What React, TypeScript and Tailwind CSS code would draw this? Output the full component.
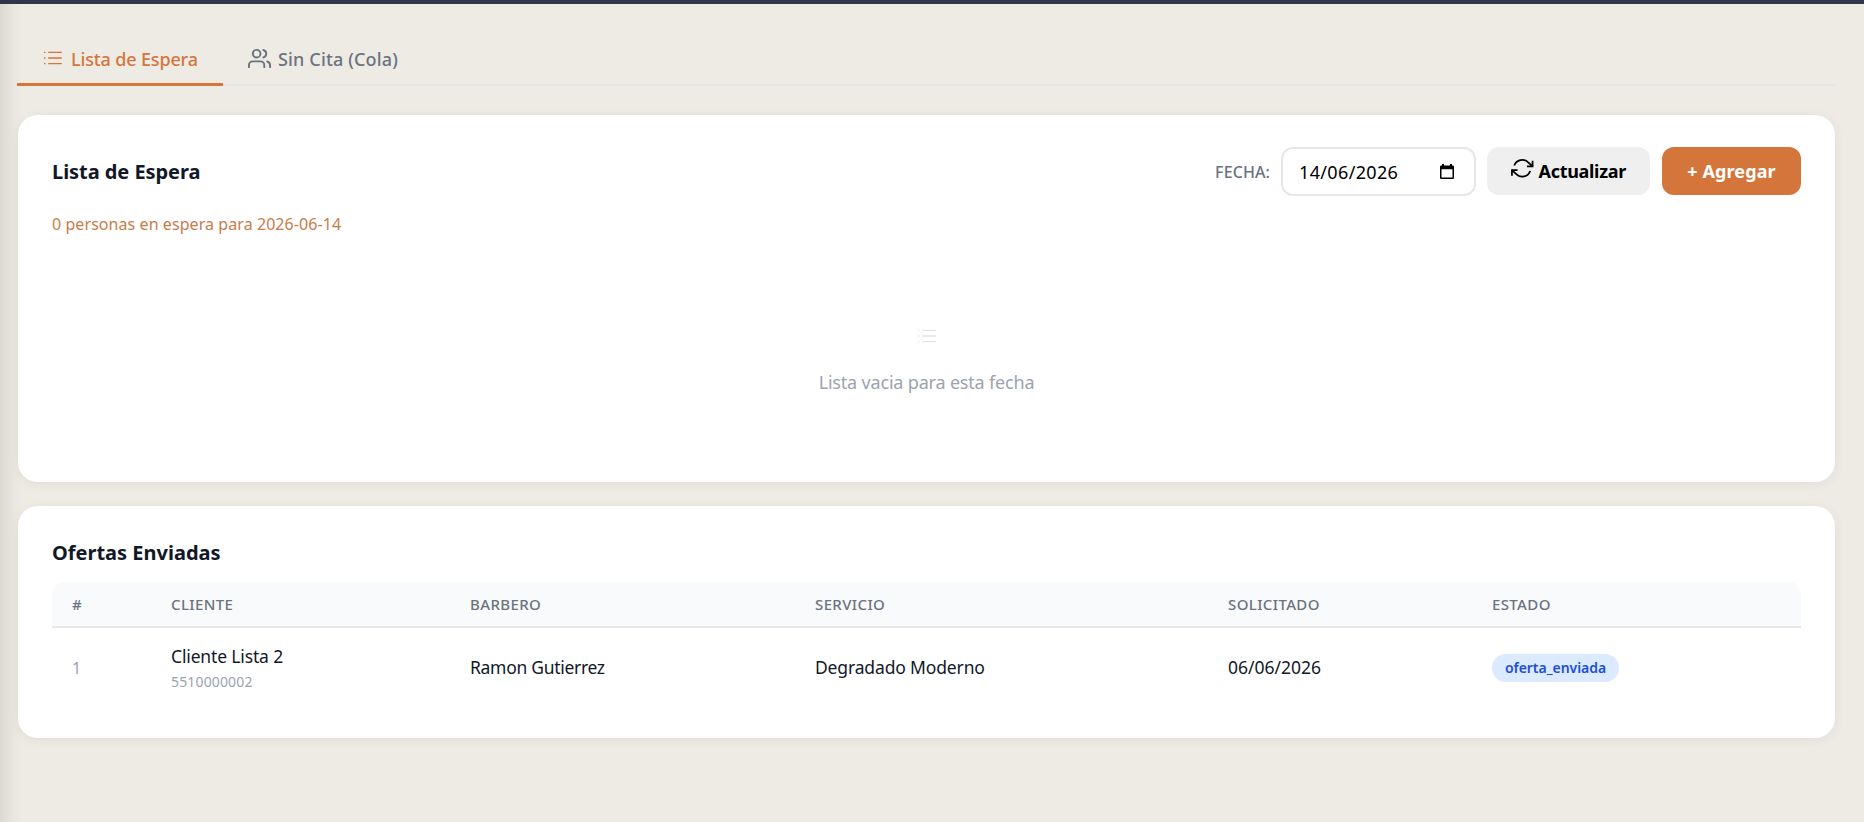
import { useState } from 'react';

interface Oferta {
  id: number;
  cliente: string;
  telefono: string;
  barbero: string;
  servicio: string;
  solicitado: string;
  estado: string;
}

const ofertas: Oferta[] = [
  {
    id: 1,
    cliente: 'Cliente Lista 2',
    telefono: '5510000002',
    barbero: 'Ramon Gutierrez',
    servicio: 'Degradado Moderno',
    solicitado: '06/06/2026',
    estado: 'oferta_enviada',
  },
];

const columns = [
  { label: '#', width: 'w-[99px]' },
  { label: 'CLIENTE', width: 'w-[299px]' },
  { label: 'BARBERO', width: 'w-[345px]' },
  { label: 'SERVICIO', width: 'w-[413px]' },
  { label: 'SOLICITADO', width: 'w-[264px]' },
  { label: 'ESTADO', width: 'w-[329px]' },
];

function ListIcon({ className = '' }: { className?: string }) {
  return (
    <svg width="18" height="14" viewBox="0 0 18 14" fill="none" stroke="currentColor" strokeWidth="1.4" className={className}>
      <path d="M4.2 1.4h13.6M4.2 7h13.6M4.2 12.6h13.6M0 1.4h1.5M0 7h1.5M0 12.6h1.5" />
    </svg>
  );
}

function UsersIcon() {
  return (
    <svg width="23" height="23" viewBox="0 0 24 24" fill="none" stroke="currentColor" strokeWidth="2" strokeLinecap="round" strokeLinejoin="round">
      <path d="M17 21v-2a4 4 0 0 0-4-4H5a4 4 0 0 0-4 4v2" />
      <circle cx="9" cy="7" r="4" />
      <path d="M23 21v-2a4 4 0 0 0-3-3.87M16 3.13a4 4 0 0 1 0 7.75" />
    </svg>
  );
}

function RefreshIcon({ className = '' }: { className?: string }) {
  return (
    <svg width="22.5" height="22.5" viewBox="0 0 24 24" fill="none" stroke="currentColor" strokeWidth="1.9" className={className}>
      <path d="M23 4v6h-6M1 20v-6h6" />
      <path d="M3.51 9a9 9 0 0 1 14.85-3.36L23 10M1 14l4.64 4.36A9 9 0 0 0 20.49 15" />
    </svg>
  );
}

function DateIcon() {
  return (
    <svg width="14" height="16" viewBox="0 0 14 16">
      <path
        fillRule="evenodd"
        fill="currentColor"
        d="M2 0h2v1.5h6V0h2v1.5h.8Q14 1.5 14 2.8v11Q14 15 12.8 15H1.2Q0 15 0 13.8v-11Q0 1.5 1.2 1.5H2zM1.5 5.2v8.3h11V5.2z"
      />
    </svg>
  );
}

export default function ListaEspera() {
  const [tab, setTab] = useState<'lista' | 'cola'>('lista');

  const tabClass = (active: boolean) =>
    active
      ? 'border-[#d4763b] text-[#d4763b]'
      : 'border-transparent text-[#6b7280]';

  return (
    <div className="h-[822px] overflow-hidden border-t-4 border-[#2d3748] bg-[#eeebe4] pl-[17px] pr-7 pt-6 font-['Noto_Sans',sans-serif] text-[#111827] shadow-[inset_20px_0_18px_-14px_rgba(0,0,0,0.1)]">
      {/* Tabs */}
      <div className="flex h-[58px] border-b-2 border-[#e5e5e5]">
        <button
          onClick={() => setTab('lista')}
          className={`-mb-0.5 flex h-[58px] w-[206px] items-center gap-[9px] border-b-3 pl-[27px] pt-1.5 text-lg font-medium tracking-[-0.15px] ${tabClass(tab === 'lista')}`}
        >
          <ListIcon className="mb-0.5" />
          <span className="whitespace-nowrap">Lista de Espera</span>
        </button>
        <button
          onClick={() => setTab('cola')}
          className={`-mb-0.5 flex h-[58px] items-center gap-[7px] border-b-3 pl-[25px] pt-1.5 text-lg font-medium tracking-[0.15px] ${tabClass(tab === 'cola')}`}
        >
          <UsersIcon />
          <span className="whitespace-nowrap">Sin Cita (Cola)</span>
        </button>
      </div>

      {/* Waiting list */}
      <section className="mx-px mt-[29px] h-[367px] rounded-[20px] bg-white px-[34px] pt-8 shadow-[0_2px_12px_rgba(0,0,0,0.06)]">
        <div className="flex h-[49px] items-center">
          <h2 className="flex-1 text-xl font-bold tracking-[-0.05px]">Lista de Espera</h2>
          <span className="mr-[11px] text-base font-medium tracking-[0.1px] text-[#6b7280]">FECHA:</span>
          <div className="mr-[11px] flex h-[49px] w-[195px] items-center justify-between rounded-xl border-2 border-[#e5e7eb] pl-4 pr-5 text-lg tracking-[0.35px] text-black">
            <span>14/06/2026</span>
            <DateIcon />
          </div>
          <button className="mb-px mr-3 flex h-12 w-[163px] items-center gap-[5px] rounded-xl bg-[#efefef] pl-6 text-lg font-bold tracking-[-0.3px] text-black">
            <RefreshIcon className="mb-1.5" />
            <span>Actualizar</span>
          </button>
          <button className="mb-px h-12 w-[139px] rounded-xl bg-[#d4763b] text-lg font-bold tracking-[0.1px] text-white">
            + Agregar
          </button>
        </div>
        <p className="mt-4 text-base tracking-[0.07px] text-[#c97b4a]">0 personas en espera para 2026-06-14</p>
        <div className="mt-[93px] flex flex-col items-center">
          <ListIcon className="text-[#dfe2e6]" />
          <p className="mt-[25px] text-lg tracking-[-0.18px] text-[#9ca3af]">Lista vacia para esta fecha</p>
        </div>
      </section>

      {/* Sent offers */}
      <section className="mx-px mt-6 h-[232px] rounded-[20px] bg-white px-[34px] pt-[33px] shadow-[0_2px_12px_rgba(0,0,0,0.06)]">
        <h2 className="text-xl font-bold">Ofertas Enviadas</h2>
        <table className="mt-[15px] w-full table-fixed border-separate border-spacing-0 text-left">
          <thead>
            <tr className="h-[46px]">
              {columns.map((col) => (
                <th
                  key={col.label}
                  className={`${col.width} border-b-2 border-[#e5e7eb] bg-[#f9fafb] pl-5 text-[15px] font-medium tracking-wide text-[#6b7280] first:rounded-tl-xl last:rounded-tr-xl`}
                >
                  {col.label}
                </th>
              ))}
            </tr>
          </thead>
          <tbody>
            {ofertas.map((o) => (
              <tr key={o.id} className="h-[79px] text-[17.5px] tracking-[-0.15px]">
                <td className="pl-5 text-base text-[#9ca3af]">{o.id}</td>
                <td className="pl-5">
                  <div className="leading-7">{o.cliente}</div>
                  <div className="text-sm leading-6 tracking-[0.15px] text-[#9ca3af]">{o.telefono}</div>
                </td>
                <td className="pl-5 tracking-[-0.3px]">{o.barbero}</td>
                <td className="pl-5">{o.servicio}</td>
                <td className="pl-5 tracking-normal">{o.solicitado}</td>
                <td className="pl-5">
                  <span className="flex h-7 w-[127px] items-center justify-center rounded-full bg-[#dbeafe] text-sm font-semibold tracking-[-0.05px] text-[#1d4ed8]">
                    {o.estado}
                  </span>
                </td>
              </tr>
            ))}
          </tbody>
        </table>
      </section>
    </div>
  );
}
